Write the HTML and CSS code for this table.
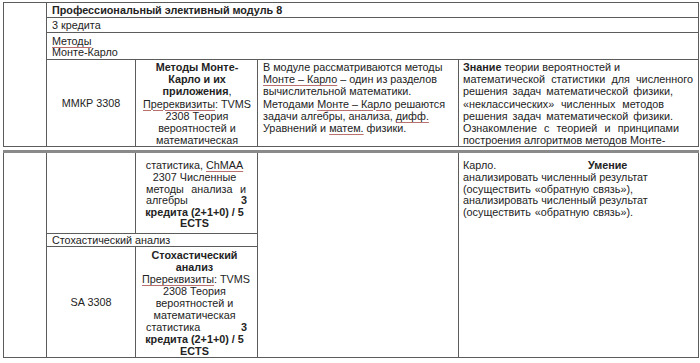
FILE: index.html
```html
<!DOCTYPE html>
<html lang="ru">
<head>
<meta charset="utf-8">
<title>Профессиональный элективный модуль 8</title>
<link rel="stylesheet" href="styles.css">
</head>
<body>
<div class="page">
  <table class="tbl tbl-top">
    <colgroup><col class="c1"><col class="c2"><col class="c3"><col class="c4"><col class="c5"></colgroup>
    <tr class="r-title">
      <td rowspan="4" class="blank"></td>
      <td colspan="4" class="title">Профессиональный элективный модуль 8</td>
    </tr>
    <tr class="r-credits">
      <td colspan="4" class="plain">3 кредита</td>
    </tr>
    <tr class="r-module">
      <td colspan="4" class="plain two"><span class="spell">Методы</span><br>Монте-Карло</td>
    </tr>
    <tr class="r-main">
      <td class="code">ММКР 3308</td>
      <td class="name">
        <div class="b">Методы Монте-</div>
        <div class="b">Карло и их</div>
        <div><b>приложения</b>,</div>
        <div><span class="spell">Пререквизиты</span>: TVMS</div>
        <div>2308 Теория</div>
        <div>вероятностей и</div>
        <div>математическая</div>
      </td>
      <td class="desc">
        <div class="jw w179">В модуле рассматриваются методы</div>
        <div class="jw w170"><span class="spell">Монте – Карло</span> – один из разделов</div>
        <div class="jw w139">вычислительной математики.</div>
        <div class="jw w180">Методами <span class="spell">Монте – Карло</span> решаются</div>
        <div class="jw w162">задачи алгебры, анализа, <span class="spell">дифф.</span></div>
        <div class="jw w142">Уравнений и <span class="spell">матем.</span> физики.</div>
      </td>
      <td class="comp">
        <div class="jw w146"><b>Знание</b> теории вероятностей и</div>
        <div class="jw w230">математической статистики для численного</div>
        <div class="jw w210">решения задач математической физики,</div>
        <div class="jw w201">«неклассических» численных методов</div>
        <div class="jw w210">решения задач математической физики.</div>
        <div class="jw w216">Ознакомление с теорией и принципами</div>
        <div class="jw w196">построения алгоритмов методов Монте-</div>
      </td>
    </tr>
  </table>

  <table class="tbl tbl-bottom">
    <colgroup><col class="c1"><col class="c2"><col class="c3"><col class="c4"><col class="c5"></colgroup>
    <tr class="r-cont">
      <td rowspan="3" class="blank"></td>
      <td class="blank"></td>
      <td class="name cont">
        <div>статистика, <span class="spell">ChMAA</span></div>
        <div>2307 Численные</div>
        <div class="spread"><span>методы</span><span>анализа</span><span>и</span></div>
        <div class="spread"><span>алгебры</span><b>3</b></div>
        <div class="b">кредита (2+1+0) / 5</div>
        <div class="b">ECTS</div>
      </td>
      <td rowspan="3" class="blank"></td>
      <td rowspan="3" class="comp cont">
        <div><span class="carlo">Карло.</span><b>Умение</b></div>
        <div class="jw w181">анализировать численный результат</div>
        <div class="jw w170">(осуществить «обратную связь»),</div>
        <div class="jw w181">анализировать численный результат</div>
        <div class="jw w170">(осуществить «обратную связь»).</div>
      </td>
    </tr>
    <tr class="r-sub">
      <td colspan="2" class="plain"><span class="jw w114">Стохастический анализ</span></td>
    </tr>
    <tr class="r-sa">
      <td class="code">SA 3308</td>
      <td class="name sa">
        <div class="b">Стохастический</div>
        <div class="b">анализ</div>
        <div><span class="spell">Пререквизиты</span>: TVMS</div>
        <div>2308 Теория</div>
        <div>вероятностей и</div>
        <div>математическая</div>
        <div class="spread"><span>статистика</span><b>3</b></div>
        <div class="b">кредита (2+1+0) / 5</div>
        <div class="b">ECTS</div>
      </td>
    </tr>
  </table>
</div>
</body>
</html>
```

FILE: styles.css
```css
* { box-sizing: border-box; }
html, body { margin: 0; padding: 0; background: #fff; }
body {
  font-family: "Liberation Sans", Arial, sans-serif;
  font-size: 10.8px;
  color: #232323;
  width: 700px;
  height: 363px;
  overflow: hidden;
}
.page { padding: 2px 0 0 3px; }

.tbl {
  border-collapse: collapse;
  table-layout: fixed;
  width: 695px;
}
.c1 { width: 43px; }
.c2 { width: 89px; }
.c3 { width: 122px; }
.c4 { width: 201px; }
.c5 { width: 240px; }

.tbl td {
  border: 1px solid #5c5c5c;
  padding: 0;
  vertical-align: top;
  line-height: 12.2px;
  white-space: nowrap;
}

.tbl-bottom {
  margin-top: 3px;
  border-top: 3px solid #8a8a8a;
}
.tbl-bottom td { line-height: 11.6px; }

.r-title td { height: 15px; }
.r-credits td { height: 15px; }
.r-module td { height: 27px; }
.r-main td { height: 87px; }
.r-cont td { height: 82px; }
.r-sub td { height: 13px; }
.r-sa td { height: 111px; }

.title { font-weight: bold; padding-left: 5px !important; vertical-align: middle !important; }
.plain { padding-left: 5px !important; vertical-align: middle !important; }
.plain.two { vertical-align: top !important; padding-top: 3px !important; line-height: 11px !important; }

.code { text-align: center; vertical-align: middle !important; }

.name { text-align: center; padding: 1px 4px 0 5px !important; }
.name.cont { padding: 7px 10px 0 6px !important; }
.name.sa { padding: 2px 10px 0 6px !important; line-height: 12px !important; }
.name .spread { padding-left: 4px; }
.b { font-weight: bold; }

.spread { display: flex; justify-content: space-between; }
.name.cont .spread:nth-child(3) { padding-right: 1px; }

.desc { padding: 1px 0 0 5px !important; }
.comp { padding: 1px 0 0 4px !important; }
.comp.cont { padding-top: 7px !important; }

.jw { display: block; text-align: justify; text-align-last: justify; }
span.jw { display: inline-block; }
.w114 { width: 114px; }
.w139 { width: 139px; }
.w142 { width: 142px; }
.w146 { width: 146px; }
.w162 { width: 162px; }
.w170 { width: 170px; }
.w179 { width: 179px; }
.w180 { width: 180px; }
.w181 { width: 181px; }
.w196 { width: 196px; }
.w201 { width: 201px; }
.w210 { width: 210px; }
.w216 { width: 216px; }
.w230 { width: 230px; }

.carlo { display: inline-block; width: 125px; }

.spell {
  text-decoration: underline;
  text-decoration-color: #b9706e;
  text-decoration-thickness: 1px;
  text-underline-offset: 2px;
}
```
